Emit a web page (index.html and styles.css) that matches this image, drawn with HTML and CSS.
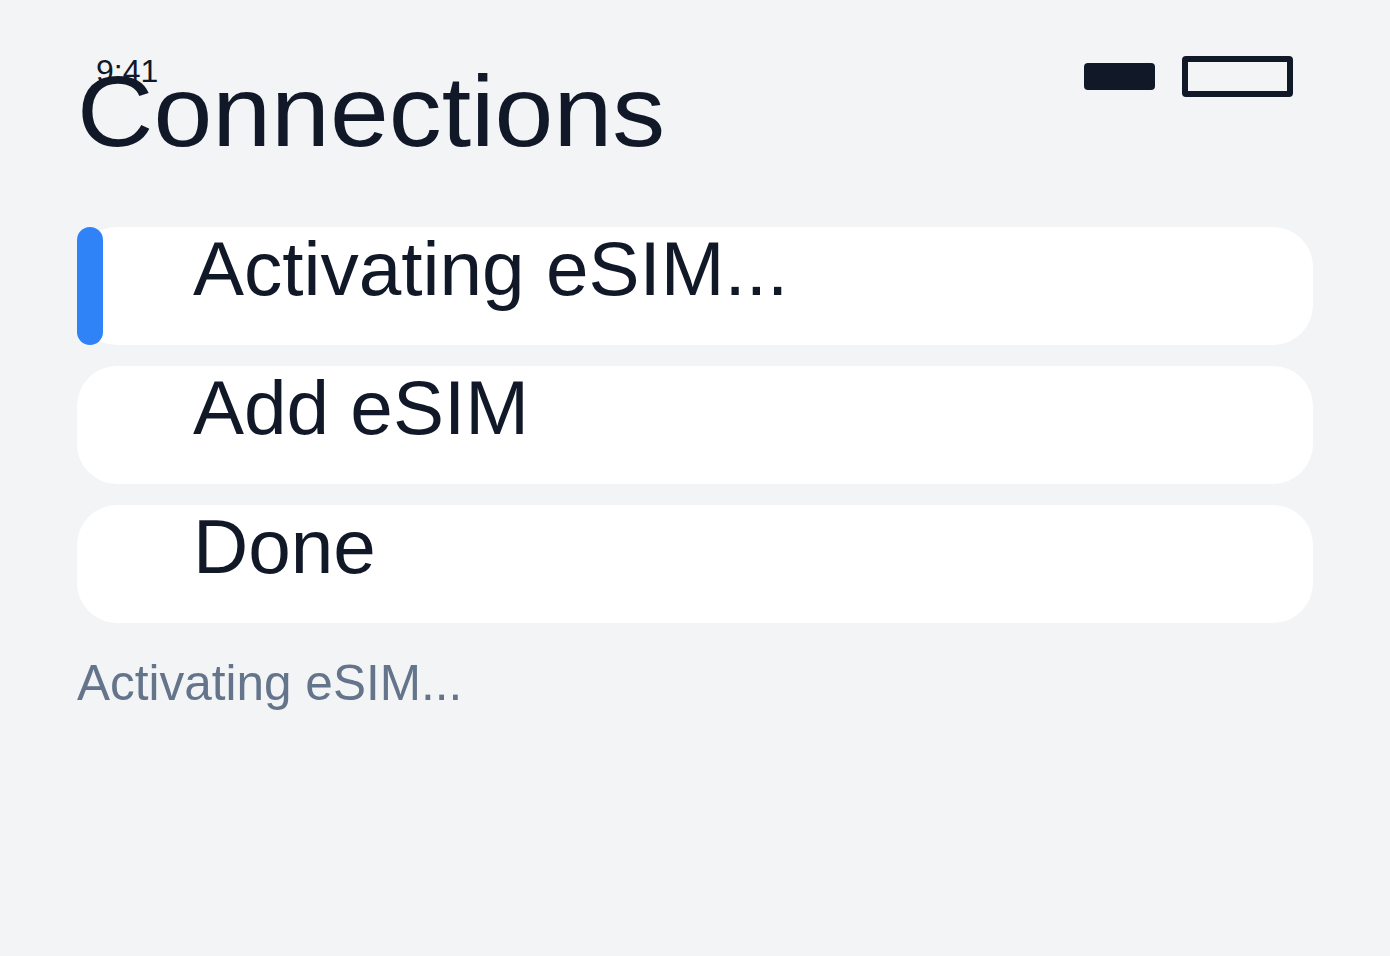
FILE: index.html
```html
<!DOCTYPE html>
<html lang="en">
<head>
    <meta charset="UTF-8">
    <meta name="viewport" content="width=device-width, initial-scale=1.0">
    <title>Connections</title>
    <link rel="stylesheet" href="styles.css">
</head>
<body>
    <div class="screen">
        <!-- status bar sits over the title -->
        <div class="status">
            <span class="time">9:41</span>
            <div class="status-icons">
                <span class="signal"></span>
                <span class="battery"></span>
            </div>
        </div>

        <h1 class="title">Connections</h1>

        <ul class="steps">
            <li class="step active">
                <span class="marker"></span>
                <span class="label">Activating eSIM...</span>
            </li>
            <li class="step">
                <span class="marker"></span>
                <span class="label">Add eSIM</span>
            </li>
            <li class="step">
                <span class="marker"></span>
                <span class="label">Done</span>
            </li>
        </ul>

        <p class="status-text">Activating eSIM...</p>
    </div>
</body>
</html>
```

FILE: styles.css
```css
* {
    margin: 0;
    padding: 0;
    box-sizing: border-box;
}

body {
    font-family: "Liberation Sans", Arial, sans-serif;
    background-color: #f3f4f6;
    color: #111827;
}

.screen {
    position: relative;
    padding: 54px 77px;
    min-height: 956px;
}

.status {
    position: absolute;
    top: 53px;
    left: 77px;
    right: 77px;
    padding: 0 20px 0 19px;
    display: flex;
    justify-content: space-between;
    align-items: flex-start;
    z-index: 1;
}

.time {
    font-size: 32px;
    color: #111827;
}

.status-icons {
    display: flex;
    align-items: center;
    gap: 27px;
    margin-top: 3px;
}

.signal {
    width: 71px;
    height: 27px;
    background-color: #111827;
    border-radius: 4px;
}

.battery {
    width: 111px;
    height: 41px;
    border: 6px solid #111827;
    border-radius: 4px;
}

.title {
    font-size: 100px;
    font-weight: normal;
    line-height: normal;
    transform: scaleX(1.058);
    transform-origin: left center;
}

.steps {
    list-style: none;
    margin-top: 58px;
    display: flex;
    flex-direction: column;
    gap: 21px;
}

.step {
    height: 118px;
    background-color: #fff;
    border-radius: 40px;
    display: flex;
    align-items: stretch;
}

.marker {
    width: 26px;
    border-radius: 13px;
}

.step.active .marker {
    background-color: #3083f6;
}

.label {
    margin-left: 90px;
    font-size: 76.5px;
    line-height: 1.1;
}

.status-text {
    margin-top: 31px;
    font-size: 49.5px;
    color: #64748b;
}
```
